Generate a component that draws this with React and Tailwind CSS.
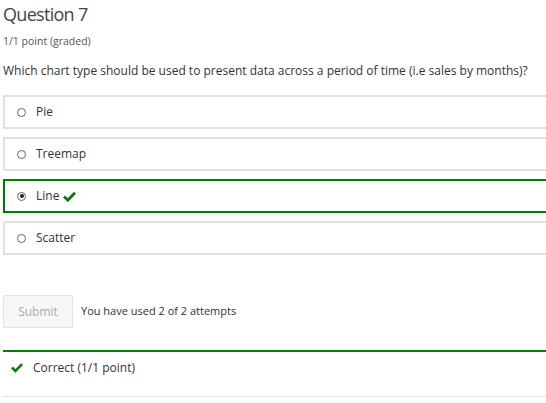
import React from "react";

function Radio({ checked }) {
  return (
    <span className="relative inline-block w-[9px] h-[9px] rounded-full border border-[#666] bg-white shrink-0">
      {checked && <span className="absolute left-[1.5px] top-[1.5px] w-[4px] h-[4px] rounded-full bg-[#222]" />}
    </span>
  );
}

function Check({ className }) {
  return (
    <svg className={className} width="13" height="11" viewBox="0 0 13 11">
      <path d="M1 5.5 L4.8 9.2 L12 1.8" fill="none" stroke="#0a7a0a" strokeWidth="2.8" strokeLinecap="butt" strokeLinejoin="miter" />
    </svg>
  );
}

function Option({ label, checked, correct }) {
  return (
    <div
      className={
        "h-[34px] flex items-center pl-[12px] gap-[10px] border-2 " +
        (correct ? "border-[#008000]" : "border-[#e1e1e1]")
      }
    >
      <Radio checked={checked} />
      <span className="text-[12px] text-[#333] flex items-center gap-[4px]">
        {label}
        {correct && <Check />}
      </span>
    </div>
  );
}

export default function App() {
  return (
    <div
      className="w-[546px] h-[403px] overflow-hidden bg-white pl-[3px] relative"
      style={{ fontFamily: '"Open Sans", sans-serif' }}
    >
      <h2 className="text-[18px] tracking-[-0.7px] leading-[26px] text-[#444] pt-[1px] font-normal">Question 7</h2>
      <div className="text-[10.5px] text-[#555] mt-[8px] leading-[12px]">1/1 point (graded)</div>
      <p className="text-[12px] text-[#333] mt-[15px] leading-[17px]">
        Which chart type should be used to present data across a period of time (i.e sales by months)?
      </p>
      <div className="mt-[16px] flex flex-col gap-[8px] mr-[-4px]">
        <Option label="Pie" />
        <Option label="Treemap" />
        <Option label="Line" checked correct />
        <Option label="Scatter" />
      </div>
      <div className="mt-[40px] flex items-center gap-[8px]">
        <button className="w-[70px] h-[33px] bg-[#f7f7f7] border border-[#e3e3e3] rounded-[2px] text-[12px] text-[#aaa]">
          Submit
        </button>
        <span className="text-[11px] text-[#333]">You have used 2 of 2 attempts</span>
      </div>
      <div className="mt-[22px] border-t-2 border-[#008000] h-[47px] flex items-start pt-[7px] pl-[8px] gap-[10px] border-b border-b-[#e0e0e0] mr-[-4px]">
        <Check className="w-[12px] mt-[3px]" />
        <span className="text-[12px] text-[#333]">Correct (1/1 point)</span>
      </div>
    </div>
  );
}
